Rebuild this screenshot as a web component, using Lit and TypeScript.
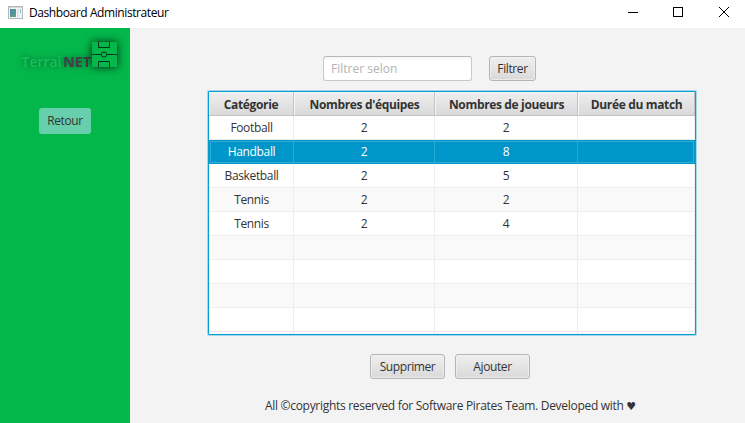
import { LitElement, html, css } from "lit";
import { customElement, state } from "lit/decorators.js";
import { classMap } from "lit/directives/class-map.js";

interface Sport {
  name: string;
  teams: string;
  players: string;
  duration: string;
}

const blank: Sport = { name: "", teams: "", players: "", duration: "" };

@customElement("window-bar")
class WindowBar extends LitElement {
  static styles = css`
    :host {
      display: flex;
      align-items: center;
      height: 28px;
      box-sizing: border-box;
      padding-left: 8px;
      background: #fff;
      color: #000;
      font: 12px/16px "Open Sans", "Noto Sans", sans-serif;
    }
    .icon { display: block; flex: none; margin-top: -3px; }
    .title { flex: 1; padding-left: 6px; margin-top: -2px; letter-spacing: -0.41px; white-space: nowrap; }
    .controls { display: block; flex: none; }
  `;
  render() {
    return html`
      <svg class="icon" width="15" height="13" viewBox="0 0 15 13">
        <defs>
          <linearGradient id="pane" x1="0" y1="0" x2="1" y2="1">
            <stop offset="0" stop-color="#4a86b8" /><stop offset="1" stop-color="#58a878" />
          </linearGradient>
        </defs>
        <rect x="0.5" y="0.5" width="14" height="12" fill="#f4f4f4" stroke="#b4b7bc" />
        <rect x="1" y="1" width="13" height="1" fill="#d5d7da" />
        <rect x="2" y="3" width="6" height="8" fill="url(#pane)" />
        <rect x="9" y="3" width="2" height="8" fill="#dde3e7" />
        <rect x="12" y="3" width="1" height="4" fill="#8fc0b2" />
      </svg>
      <span class="title">Dashboard Administrateur</span>
      <svg class="controls" width="138" height="28" viewBox="0 0 138 28" fill="none" stroke="#000">
        <path d="M21 12.5h10M66.500 7.500h9v9h-9z" shape-rendering="crispEdges" />
        <path d="M112 7l10 10M122 7l-10 10" />
      </svg>
    `;
  }
}

@customElement("terrain-logo")
class TerrainLogo extends LitElement {
  static styles = css`
    :host { display: block; width: 130px; height: 52px; }
    svg { display: block; overflow: visible; }
    .word { font: 700 15px "Open Sans", "Noto Sans", sans-serif; }
    .green { fill: #17c05c; font-weight: 600; }
    .dark { fill: #443c4c; }
    .shade { filter: drop-shadow(0 0 3px rgba(0, 45, 15, 0.6)); }
    .pitch { filter: drop-shadow(0 0 4px rgba(0, 20, 8, 0.9)); }
  `;
  render() {
    return html`
      <svg width="130" height="52" viewBox="0 28 130 52">
        <g class="word shade">
          <text class="green" x="21.500" y="66.500" textLength="40" lengthAdjust="spacingAndGlyphs">Terrai</text>
          <text class="dark" x="63" y="66.500" textLength="28" lengthAdjust="spacingAndGlyphs">NET</text>
        </g>
        <g class="pitch"><rect x="92" y="42" width="25" height="25" fill="#04b74b" /></g>
        <g fill="none" stroke="#06351b" stroke-width="1">
          <path d="M92 54.500h9.500M106.500 54.500H117M98.500 42v5.500h11V42M98.500 67v-5.500h11V67" />
          <circle cx="104" cy="54.500" r="2.700" />
        </g>
      </svg>
    `;
  }
}

@customElement("sports-table")
class SportsTable extends LitElement {
  @state() private selected = 1;

  private rows: Sport[] = [
    { name: "Football", teams: "2", players: "2", duration: "" },
    { name: "Handball", teams: "2", players: "8", duration: "" },
    { name: "Basketball", teams: "2", players: "5", duration: "" },
    { name: "Tennis", teams: "2", players: "2", duration: "" },
    { name: "Tennis", teams: "2", players: "4", duration: "" },
    blank, blank, blank, blank, blank,
  ];

  static styles = css`
    :host {
      display: block;
      box-sizing: border-box;
      width: 488px;
      height: 244px;
      border: 1px solid #039ed3;
      box-shadow: 0 0 0 1px #a3d8ec;
      border-radius: 1px;
      overflow: hidden;
      background: #fff;
    }
    .row {
      display: grid;
      grid-template-columns: 85px 141px 143px 117px;
      height: 24px;
    }
    .cell {
      box-sizing: border-box;
      height: 24px;
      border-right: 1px solid #ededed;
      border-bottom: 1px solid #ededed;
      text-align: center;
      line-height: 24px;
      white-space: nowrap;
      letter-spacing: -0.35px;
    }
    .cell:first-child { padding-left: 1px; }
    .even { background: #f9f9f9; }
    .head .cell {
      padding-left: 1px;
      border-color: #c3c3c3;
      background: linear-gradient(#efefef, #d9d9d9);
      box-shadow: inset 1px 1px 0 #f6f6f6;
      font-weight: 700;
      letter-spacing: -0.35px;
      line-height: 25px;
    }
    .head .cell:first-child { padding-left: 0; }
    .selected { background: #0096c9; color: #fff; box-shadow: inset 0 0 0 1px #0096c9, inset 0 0 0 2px #30abd5; }
    .selected .cell { border-right-color: #29a6d1; border-bottom-color: transparent; }
    .selected .cell:last-child { border-right-color: transparent; }
  `;
  render() {
    return html`
      <div class="row head">
        <div class="cell">Catégorie</div>
        <div class="cell">Nombres d'équipes</div>
        <div class="cell">Nombres de joueurs</div>
        <div class="cell">Durée du match</div>
      </div>
      ${this.rows.map(
        (r, i) => html`
          <div
            class=${classMap({ row: true, even: i % 2 === 1, selected: i === this.selected })}
            @click=${() => { if (r.name) this.selected = i; }}
          >
            <div class="cell">${r.name}</div>
            <div class="cell">${r.teams}</div>
            <div class="cell">${r.players}</div>
            <div class="cell">${r.duration}</div>
          </div>
        `
      )}
    `;
  }
}

@customElement("app-root")
class AppRoot extends LitElement {
  static styles = css`
    :host {
      display: flex;
      flex-direction: column;
      width: 745px;
      height: 423px;
      overflow: hidden;
      background: #f3f3f3;
      color: #333;
      font: 12px/16px "Open Sans", "Noto Sans", sans-serif;
    }
    .body { display: flex; flex: 1; min-height: 0; }
    .side {
      display: flex;
      flex-direction: column;
      align-items: center;
      gap: 28px;
      width: 130px;
      background: #04b74b;
    }
    .main { flex: 1; padding: 28px 0 0 78px; }
    .filters { display: flex; gap: 17px; padding-left: 115px; margin-bottom: 10px; }
    button, input {
      box-sizing: border-box;
      height: 25px;
      margin: 0;
      padding: 1px 0 0;
      border: 1px solid #b5b5b5;
      border-radius: 3px;
      color: #333;
      font: inherit;
      letter-spacing: -0.4px;
    }
    input { width: 149px; padding: 0 7px; background: linear-gradient(#f4f4f4, #fff 4px); border-color: #b9b9b9 #c8c8c8 #c8c8c8; outline: 0; letter-spacing: 0; }
    input::placeholder { color: #b3b3b3; opacity: 1; }
    button { background: linear-gradient(#efefef, #d9d9d9); box-shadow: inset 0 0 0 1px #f3f3f3aa; }
    .filter { width: 47px; }
    .back { width: 52px; height: 26px; padding: 0; border: 0; background: #68cfad; box-shadow: none; }
    .actions { display: flex; gap: 10px; padding-left: 162px; margin-top: 19px; }
    .actions button { width: 75px; }
    .foot { margin: 19px 0 0 57px; white-space: nowrap; letter-spacing: -0.3px; }
    .heart { font-family: "DejaVu Sans", sans-serif; font-size: 11px; line-height: 1; }
  `;
  render() {
    return html`
      <window-bar></window-bar>
      <div class="body">
        <aside class="side">
          <terrain-logo></terrain-logo>
          <button class="back">Retour</button>
        </aside>
        <main class="main">
          <div class="filters">
            <input placeholder="Filtrer selon" />
            <button class="filter">Filtrer</button>
          </div>
          <sports-table></sports-table>
          <div class="actions">
            <button>Supprimer</button>
            <button>Ajouter</button>
          </div>
          <div class="foot">All ©copyrights reserved for Software Pirates Team. Developed with <span class="heart">♥</span></div>
        </main>
      </div>
    `;
  }
}
